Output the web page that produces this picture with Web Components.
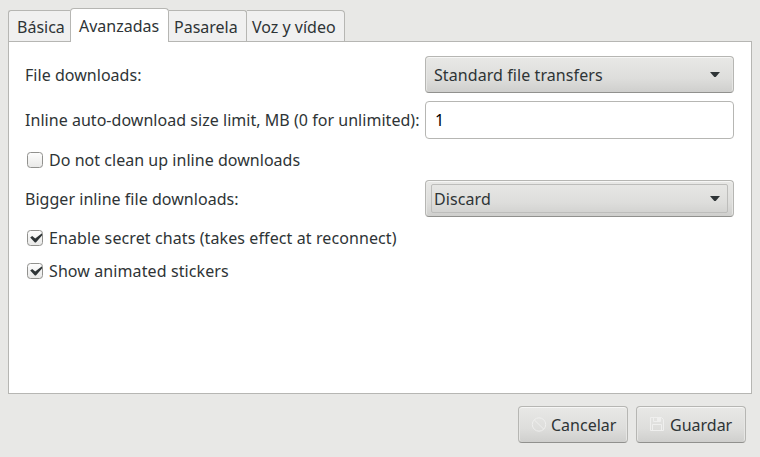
<!DOCTYPE html>
<html lang="es">
<head>
<meta charset="utf-8">
<title>Avanzadas</title>
<style>
html, body { margin: 0; height: 100%; background: #e8e8e6; }
body { font: 16px/22px "Noto Sans", sans-serif; color: #2e3436; overflow: hidden; }
</style>
</head>
<body>
<settings-window></settings-window>
<script>
function define(name, html) {
  const t = document.createElement('template');
  t.innerHTML = html;
  customElements.define(name, class extends HTMLElement {
    constructor() {
      super();
      this.attachShadow({ mode: 'open' }).append(t.content.cloneNode(true));
    }
  });
}

define('tab-label', `<style>
:host { display: block; box-sizing: border-box; height: 31px; margin-top: 2px; padding: 5px 0 0 8px;
  border: 1px solid #b6b6b3; border-left-width: 0; border-bottom: 0; border-radius: 0 3px 0 0; background: #f0f0f0; white-space: nowrap; }
:host([first]) { border-left-width: 1px; border-right-width: 0; border-radius: 3px 0 0 0; }
:host([last]) { border-radius: 0 4px 0 0; }
:host([active]) { height: 34px; margin-top: 0; padding: 6px 0 0 8px; border-left-width: 1px; border-radius: 4px 4px 0 0;
  background: #fff; z-index: 1; position: relative; }
</style><slot></slot>`);

define('combo-box', `<style>
:host { display: flex; box-sizing: border-box; height: 37px; padding: 0 13px 0 8px; align-items: center; justify-content: space-between; letter-spacing: .08px;
  border: 1px solid #b6b6b3; border-bottom-color: #91918e; border-radius: 4px;
  background: linear-gradient(#e8e8e6, #dededc 60%, #cfcfcd); box-shadow: inset 0 1px #f6f6f5, inset 1px 0 #e6e6e4, inset -1px 0 #e6e6e4; }
:host([focused]) { padding: 3px 5px; }
.ring { display: flex; flex: 1; height: 29px; box-sizing: border-box; align-items: center; justify-content: space-between; }
:host([focused]) .ring { border: 1px solid #bdbdbb; border-radius: 2px; padding: 0 7px 0 2px; }
svg { display: block; }
</style><div class="ring"><slot></slot><svg width="10" height="5" viewBox="0 0 10 5"><path d="M0 0H10L5.7 5H4.3Z" fill="#2e3436"/></svg></div>`);

define('text-entry', `<style>
:host { display: flex; align-items: center; box-sizing: border-box; height: 38px; padding: 0 9px; border: 1px solid #b6b6b3; border-radius: 4px; background: #fff; color: #000; }
</style><slot></slot>`);

define('check-row', `<style>
:host { display: flex; align-items: center; gap: 6px; height: 25px; padding-left: 2px; grid-column: 1 / -1; letter-spacing: .035px; }
:host([checked]) { letter-spacing: .1px; }
i { display: block; box-sizing: border-box; width: 16px; height: 16px; border: 1px solid #91918e; border-radius: 3.5px;
  background: linear-gradient(#fdfdfd, #e9e9e8); }
svg { display: none; margin: -1px; }
:host([checked]) svg { display: block; }
</style><i><svg width="16" height="16" viewBox="0 0 16 16"><path d="M3.2 7.6L5.2 6.1L8.2 8.6L15 3.2V5.6L8.9 12.4H7.9Z" fill="#2e3436"/></svg></i><slot></slot>`);

define('push-button', `<style>
:host { display: flex; box-sizing: border-box; width: 110px; height: 37px; padding-left: 12px; align-items: center; gap: 4px;
  border: 1px solid #b6b6b3; border-bottom-color: #91918e; border-radius: 4px;
  background: linear-gradient(#e8e8e6, #dededc 60%, #cfcfcd); box-shadow: inset 0 1px #f6f6f5, inset 1px 0 #e6e6e4, inset -1px 0 #e6e6e4; }
</style><slot name="icon"></slot><slot></slot>`);

define('settings-window', `<style>
:host { display: flex; flex-direction: column; box-sizing: border-box; height: 457px; padding: 8px 8px 14px; }
.tabs { display: grid; grid-template-columns: 62px 99px 78px 98px; align-items: start; height: 33px; }
.tabs tab-label:nth-child(n+3) { padding-left: 5px; }
.panel { box-sizing: border-box; height: 353px; border: 1px solid #b6b6b3; background: #fff; padding: 14px 17px 0 16px;
  display: grid; grid-template-columns: 1fr 309px; align-content: start; align-items: center; row-gap: 8px; }
.panel span { white-space: nowrap; letter-spacing: .035px; }
.actions { display: flex; justify-content: flex-end; gap: 8px; padding: 12px 6px 0 0; }
svg { display: block; margin-top: 1px; }
</style>
<div class="tabs"><tab-label first>Básica</tab-label><tab-label active>Avanzadas</tab-label><tab-label>Pasarela</tab-label><tab-label last>Voz y vídeo</tab-label></div>
<div class="panel">
<span>File downloads:</span><combo-box>Standard file transfers</combo-box>
<span>Inline auto-download size limit, MB (0 for unlimited):</span><text-entry>1</text-entry>
<check-row>Do not clean up inline downloads</check-row>
<span>Bigger inline file downloads:</span><combo-box focused>Discard</combo-box>
<check-row checked>Enable secret chats (takes effect at reconnect)</check-row>
<check-row checked>Show animated stickers</check-row>
</div>
<div class="actions">
<push-button><svg slot="icon" width="16" height="16" viewBox="0 0 16 16" fill="none" stroke="#efefee"><circle cx="8" cy="7.5" r="6.7"/><path d="M3.2 2.8L12.8 12.2"/></svg>Cancelar</push-button>
<push-button><svg slot="icon" width="16" height="16" viewBox="0 0 16 16" fill="none" stroke="#efefee"><path d="M1.5 .5H12.5L14.5 2.5V13.5H1.5Z M3.5 13.5V7.5H12.5V13.5M4.5 .5V4.5H11.5V.5"/><path d="M8 1h3v3H8z" fill="#efefee" stroke="none"/></svg><span style="margin-left:1px">Guardar</span></push-button>
</div>`);
</script>
</body>
</html>
